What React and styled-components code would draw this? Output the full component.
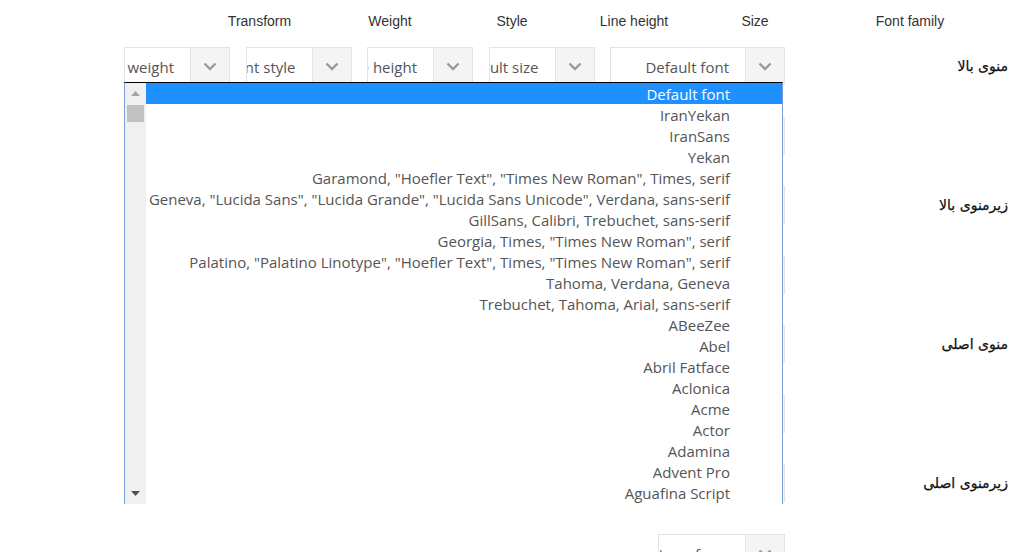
import styled, { createGlobalStyle } from "styled-components";

const GlobalStyle = createGlobalStyle`
  html, body {
    margin: 0;
    padding: 0;
    background: #fff;
  }
  body {
    font-family: "Open Sans", sans-serif;
    overflow: hidden;
  }
`;

const columns = [
  { name: "Transform", width: 133 },
  { name: "Weight", width: 128 },
  { name: "Style", width: 116 },
  { name: "Line height", width: 128 },
  { name: "Size", width: 114 },
  { name: "Font family", width: 196 },
];

const sections = ["منوی بالا", "زیرمنوی بالا", "منوی اصلی", "زیرمنوی اصلی"];

const fields = [
  { value: "Default font", width: 175 },
  { value: "Default size", width: 106 },
  { value: "Default line height", width: 106 },
  { value: "Default font style", width: 106 },
  { value: "Default font weight", width: 106 },
  { value: "Default text transform", width: 127 },
];

const fontOptions = [
  "Default font",
  "IranYekan",
  "IranSans",
  "Yekan",
  'Garamond, "Hoefler Text", "Times New Roman", Times, serif',
  'Geneva, "Lucida Sans", "Lucida Grande", "Lucida Sans Unicode", Verdana, sans-serif',
  "GillSans, Calibri, Trebuchet, sans-serif",
  'Georgia, Times, "Times New Roman", serif',
  'Palatino, "Palatino Linotype", "Hoefler Text", Times, "Times New Roman", serif',
  "Tahoma, Verdana, Geneva",
  "Trebuchet, Tahoma, Arial, sans-serif",
  "ABeeZee",
  "Abel",
  "Abril Fatface",
  "Aclonica",
  "Acme",
  "Actor",
  "Adamina",
  "Advent Pro",
  "Aguafina Script",
];

const Chevron = () => (
  <svg width="14" height="9" viewBox="0 0 14 9">
    <path d="M1.5 1.5 L7 7 L12.5 1.5" fill="none" stroke="#9a9a9a" strokeWidth="2.4" />
  </svg>
);

const Triangle = ({ down, color }) => (
  <svg width="9" height="5" viewBox="0 0 9 5">
    <polygon points={down ? "0,0 9,0 4.5,5" : "0,5 9,5 4.5,0"} fill={color} />
  </svg>
);

const App = () => {
  return (
    <Page>
      <GlobalStyle />
      <Header>
        {columns.map((col) => (
          <HeaderCell key={col.name} $width={col.width}>
            {col.name}
          </HeaderCell>
        ))}
      </Header>

      {sections.map((title) => (
        <Section key={title}>
          <SectionLabel>{title}</SectionLabel>
          <Fields>
            {fields.map((f) => (
              <Select key={f.value} $width={f.width}>
                <Arrow>
                  <Chevron />
                </Arrow>
                <Value>{f.value}</Value>
              </Select>
            ))}
          </Fields>
        </Section>
      ))}

      <Dropdown>
        <Scrollbar>
          <ScrollButton>
            <Triangle color="#a3a3a3" />
          </ScrollButton>
          <Thumb />
          <Track />
          <ScrollButton>
            <Triangle down color="#505050" />
          </ScrollButton>
        </Scrollbar>
        <Options>
          {fontOptions.map((opt, i) => (
            <Option key={opt} $selected={i === 0}>
              {opt}
            </Option>
          ))}
        </Options>
      </Dropdown>
    </Page>
  );
};

export default App;

const Page = styled.div`
  position: relative;
  width: 1019px;
  height: 552px;
  overflow: hidden;
`;

const Header = styled.div`
  display: flex;
  margin-left: 193px;
  height: 47px;
  padding-top: 13px;
  box-sizing: border-box;
`;

const HeaderCell = styled.div`
  width: ${(p) => p.$width}px;
  text-align: center;
  font-family: "Liberation Sans", Arial, sans-serif;
  font-size: 14px;
  line-height: 16px;
  color: #333;
`;

const Section = styled.div`
  display: flex;
  direction: rtl;
  margin-bottom: 31px;
`;

const SectionLabel = styled.div`
  width: 234px;
  box-sizing: border-box;
  padding-right: 11px;
  height: 38px;
  line-height: 38px;
  font-family: "DejaVu Sans", Tahoma, sans-serif;
  font-size: 14px;
  color: #111;
  -webkit-text-stroke: 0.25px #111;
`;

const Fields = styled.div`
  width: 661px;
  display: flex;
  flex-wrap: wrap;
  gap: 32px 15.5px;
`;

const Select = styled.div`
  display: flex;
  width: ${(p) => p.$width}px;
  height: 38px;
  box-sizing: border-box;
  border: 1px solid #e4e4e4;
  background: #fff;
`;

const Arrow = styled.div`
  width: 38px;
  flex-shrink: 0;
  display: flex;
  align-items: center;
  justify-content: center;
  background: #f4f4f4;
  border-left: 1px solid #e4e4e4;
`;

const Value = styled.div`
  flex: 1;
  overflow: hidden;
  white-space: nowrap;
  padding-right: 16px;
  padding-top: 2px;
  text-align: right;
  font-size: 15px;
  line-height: 34px;
  color: #555;
`;

const Dropdown = styled.div`
  position: absolute;
  left: 124px;
  top: 82px;
  width: 659px;
  height: 422px;
  box-sizing: border-box;
  display: flex;
  background: #fff;
  border-top: 1px solid #000;
  border-left: 1px solid #7ba0d9;
  border-right: 1px solid #7ba0d9;
`;

const Scrollbar = styled.div`
  width: 21px;
  flex-shrink: 0;
  display: flex;
  flex-direction: column;
  background: #f0f0f0;
`;

const ScrollButton = styled.div`
  height: 21px;
  display: flex;
  align-items: center;
  justify-content: center;
`;

const Thumb = styled.div`
  height: 17px;
  margin: 1px 2px 0;
  background: #c1c1c1;
`;

const Track = styled.div`
  flex: 1;
`;

const Options = styled.div`
  flex: 1;
  overflow: hidden;
`;

const Option = styled.div`
  height: 21px;
  box-sizing: border-box;
  padding-top: 1px;
  line-height: 20px;
  padding-right: 52px;
  text-align: right;
  white-space: nowrap;
  font-size: 15px;
  color: ${(p) => (p.$selected ? "#fff" : "#555")};
  background: ${(p) => (p.$selected ? "#1e90ff" : "transparent")};
`;
